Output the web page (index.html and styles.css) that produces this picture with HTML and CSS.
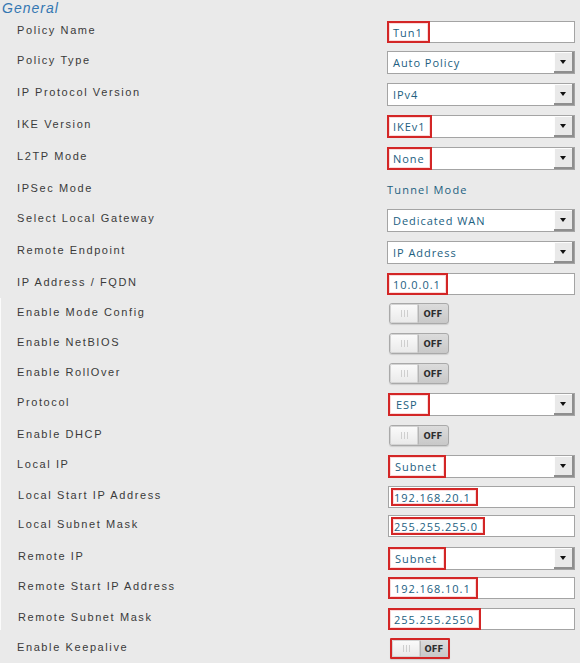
FILE: index.html
```html
<!DOCTYPE html>
<html>
<head>
<meta charset="utf-8">
<link rel="stylesheet" href="styles.css">
</head>
<body>
<div class="page">
  <div class="section-title">General</div>
  <div class="form">
    <div class="lbl">Policy Name</div>
    <div class="ctl"><div class="input"><span class="val hl">Tun1</span></div></div>

    <div class="lbl">Policy Type</div>
    <div class="ctl"><div class="select"><span class="val">Auto Policy</span><span class="arrow"></span></div></div>

    <div class="lbl">IP Protocol Version</div>
    <div class="ctl"><div class="select"><span class="val">IPv4</span><span class="arrow"></span></div></div>

    <div class="lbl">IKE Version</div>
    <div class="ctl"><div class="select"><span class="val hl">IKEv1</span><span class="arrow"></span></div></div>

    <div class="lbl">L2TP Mode</div>
    <div class="ctl"><div class="select"><span class="val hl">None</span><span class="arrow"></span></div></div>

    <div class="lbl">IPSec Mode</div>
    <div class="ctl"><div class="static">Tunnel Mode</div></div>

    <div class="lbl">Select Local Gateway</div>
    <div class="ctl"><div class="select"><span class="val">Dedicated WAN</span><span class="arrow"></span></div></div>

    <div class="lbl">Remote Endpoint</div>
    <div class="ctl"><div class="select"><span class="val">IP Address</span><span class="arrow"></span></div></div>

    <div class="lbl">IP Address / FQDN</div>
    <div class="ctl"><div class="input"><span class="val hl">10.0.0.1</span></div></div>

    <div class="lbl">Enable Mode Config</div>
    <div class="ctl"><div class="toggle"><span class="knob"><i></i><i></i><i></i></span><span class="off">OFF</span></div></div>

    <div class="lbl">Enable NetBIOS</div>
    <div class="ctl"><div class="toggle"><span class="knob"><i></i><i></i><i></i></span><span class="off">OFF</span></div></div>

    <div class="lbl">Enable RollOver</div>
    <div class="ctl"><div class="toggle"><span class="knob"><i></i><i></i><i></i></span><span class="off">OFF</span></div></div>

    <div class="lbl">Protocol</div>
    <div class="ctl ctl-low"><div class="select"><span class="val hl hl-wide">ESP</span><span class="arrow"></span></div></div>

    <div class="lbl">Enable DHCP</div>
    <div class="ctl"><div class="toggle"><span class="knob"><i></i><i></i><i></i></span><span class="off">OFF</span></div></div>

    <div class="lbl">Local IP</div>
    <div class="ctl ctl-low"><div class="select"><span class="val hl hl-pad">Subnet</span><span class="arrow"></span></div></div>

    <div class="lbl lbl-low">Local Start IP Address</div>
    <div class="ctl ctl-low"><div class="input"><span class="val hl inset">192.168.20.1</span></div></div>

    <div class="lbl lbl-low">Local Subnet Mask</div>
    <div class="ctl ctl-low"><div class="input"><span class="val hl inset">255.255.255.0</span></div></div>

    <div class="lbl lbl-low">Remote IP</div>
    <div class="ctl ctl-low"><div class="select"><span class="val hl hl-pad">Subnet</span><span class="arrow"></span></div></div>

    <div class="lbl lbl-low">Remote Start IP Address</div>
    <div class="ctl ctl-low"><div class="input"><span class="val hl">192.168.10.1</span></div></div>

    <div class="lbl lbl-low">Remote Subnet Mask</div>
    <div class="ctl ctl-low"><div class="input"><span class="val hl">255.255.2550</span></div></div>

    <div class="lbl">Enable Keepalive</div>
    <div class="ctl ctl-low"><div class="toggle toggle-hl"><span class="knob"><i></i><i></i><i></i></span><span class="off">OFF</span></div></div>
  </div>
</div>
</body>
</html>
```

FILE: styles.css
```css
html, body {
  margin: 0;
  padding: 0;
}
body {
  width: 580px;
  height: 663px;
  overflow: hidden;
  background: linear-gradient(#fbfbfb, #fbfbfb) 0 298px / 1px 332px no-repeat, #eaeaea;
  font-family: "Liberation Sans", Arial, sans-serif;
}
.section-title {
  height: 21px;
  box-sizing: border-box;
  padding-left: 2px;
  font-size: 14px;
  line-height: 16px;
  font-style: italic;
  letter-spacing: 1px;
  color: #3477b2;
}
.form {
  display: grid;
  grid-template-columns: 370px 188px;
  grid-template-rows: 30px 32px 32px 32px 32px 30px 32px 32px 30px 30px 30px 30px 32px 30px 31px 29px 32px 30px 31px 30px 25px;
  padding-left: 17px;
}
.lbl {
  font-size: 11px;
  line-height: 18px;
  letter-spacing: 1.6px;
  color: #3a3a3a;
  white-space: nowrap;
}
.lbl-low {
  padding-left: 1px;
}
.ctl {
  display: flex;
  align-items: flex-start;
}
.ctl-low {
  padding-left: 1px;
}
.input, .select {
  box-sizing: border-box;
  width: 100%;
  display: flex;
  align-items: stretch;
  border: 1px solid #a4a4a4;
  background: #fff;
}
.input { height: 22px; }
.select { height: 23px; }
.val {
  display: flex;
  align-items: center;
  padding: 0 4px 0 5px;
  font-family: "Open Sans", sans-serif;
  font-size: 11px;
  letter-spacing: 0.95px;
  color: #22607f;
  white-space: nowrap;
}
.val.hl {
  margin: -1px 0 -1px -1px;
  padding: 0 5px 0 4px;
  border: 2px solid #d32626;
  box-shadow: inset 0 0 0 1px rgba(240, 150, 150, 0.35);
}
.val.hl.inset {
  margin: 1px 0 1px 2px;
  padding-left: 1px;
}
.val.hl-wide {
  padding-left: 6px;
  padding-right: 10px;
}
.val.hl-pad {
  padding-left: 5px;
  padding-right: 7px;
}
.arrow {
  margin-left: auto;
  width: 20px;
  position: relative;
  background: #e9e9e9;
  box-shadow: inset -2px -2px 0 #8e8e8e, inset 1px 1px 0 #fdfdfd;
}
.arrow::after {
  content: "";
  position: absolute;
  left: 6px;
  top: 8px;
  border-left: 3.5px solid transparent;
  border-right: 3.5px solid transparent;
  border-top: 4px solid #111;
}
.static {
  padding-top: 3px;
  font-family: "Open Sans", sans-serif;
  font-size: 11px;
  line-height: 15px;
  letter-spacing: 1.2px;
  color: #22607f;
}
.toggle {
  margin-left: 2px;
  box-sizing: border-box;
  width: 60px;
  height: 21px;
  display: flex;
  border: 1px solid #a9a9a9;
  border-radius: 3px;
  background: linear-gradient(#dcdcdc, #c8c8c8);
  box-shadow: 0 1px 1px rgba(0, 0, 0, 0.12);
  overflow: hidden;
}
.toggle-hl {
  border: 2px solid #d32626;
  border-radius: 1px;
}
.knob {
  width: 29px;
  box-sizing: border-box;
  display: flex;
  align-items: center;
  justify-content: center;
  gap: 2px;
  background: linear-gradient(#fbfbfb, #e9e9e9);
  border-right: 1px solid #b4b4b4;
  border-radius: 2px;
  box-shadow: inset 0 0 0 1px #d4d4d4;
}
.knob i {
  width: 1px;
  height: 7px;
  background: #cfcfcf;
}
.off {
  flex: 1;
  display: flex;
  align-items: center;
  justify-content: center;
  font-family: "DejaVu Sans", sans-serif;
  font-weight: bold;
  font-size: 8.5px;
  color: #2e2e2e;
  padding-right: 1px;
}
```
